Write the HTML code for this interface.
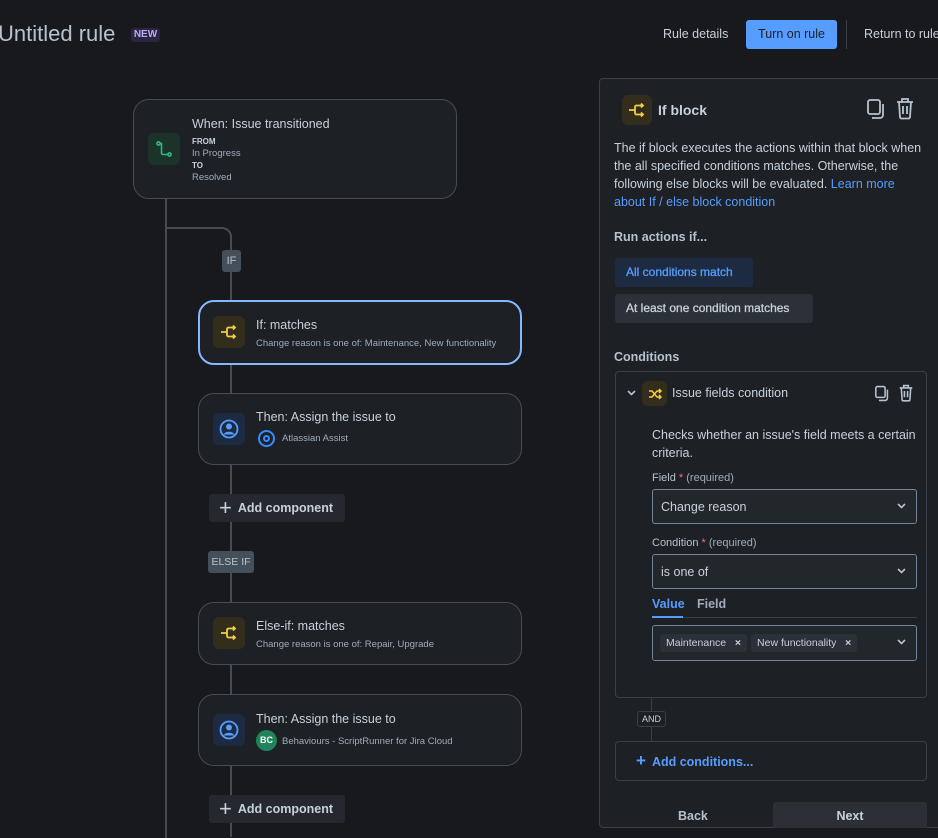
<!DOCTYPE html>
<html><head><meta charset="utf-8"><style>
*{box-sizing:border-box;margin:0;padding:0}
body{width:938px;height:834px;overflow:hidden;background:#17191c;font-family:"Liberation Sans",sans-serif;color:#c7d1db;position:relative}
.abs{position:absolute}
.card{position:absolute;left:198px;width:324px;background:#1d2025;border:1px solid #454c55;border-radius:16px}
.ic{position:absolute;width:32px;height:32px;border-radius:6px;display:flex;align-items:center;justify-content:center}
.t1{position:absolute;font-size:12.5px;color:#c7d1db;white-space:nowrap}
.t2{position:absolute;font-size:9.5px;color:#9fadbc;white-space:nowrap}
.addc{position:absolute;left:209px;width:136px;height:28px;background:#25292f;border-radius:3px;font-size:12.5px;font-weight:bold;color:#c7d1db;display:flex;align-items:center;padding-left:10px}
.lbl{position:absolute;background:#454f59;color:#b6c2cf;font-size:11px;border-radius:3px;display:flex;align-items:center;justify-content:center}
.sel{position:absolute;left:652px;width:265px;border:1px solid #738496;border-radius:3px;background:#22272b;font-size:12.5px;color:#c7d1db;padding-left:8px;display:flex;align-items:center}
.chev{position:absolute;right:10px;top:50%;margin-top:-4px}
</style></head><body>
<div class="abs" style="left:-2px;top:21px;font-size:22px;color:#b6c2cf">Untitled rule</div>
<div class="abs" style="left:131px;top:28px;width:29px;height:14px;background:#2b2541;border-radius:3px;color:#b8acf6;font-size:10px;font-weight:bold;text-align:center;line-height:14px">NEW</div>
<div class="abs" style="left:663px;top:27px;font-size:12.5px;color:#c7d1db">Rule details</div>
<div class="abs" style="left:746px;top:20px;width:91px;height:29px;background:#579dff;border-radius:3px;color:#1d2125;font-size:12.5px;text-align:center;line-height:29px">Turn on rule</div>
<div class="abs" style="left:846px;top:20px;width:1px;height:29px;background:#3b4048"></div>
<div class="abs" style="left:864px;top:27px;font-size:12.5px;color:#c7d1db;white-space:nowrap">Return to rule</div>

<div class="abs" style="left:165px;top:198px;width:2px;height:640px;background:#454c55"></div>
<div class="abs" style="left:166px;top:227px;width:66px;height:30px;border-top:2px solid #454c55;border-right:2px solid #454c55;border-top-right-radius:10px"></div>
<div class="abs" style="left:230px;top:257px;width:2px;height:580px;background:#454c55"></div>

<div class="card" style="left:133px;top:99px;height:100px"></div>
<div class="ic" style="left:148px;top:133px;background:#1c3329"><svg width="18" height="18" viewBox="0 0 18 18" fill="none" stroke="#2abb7f" stroke-width="1.6"><circle cx="3.5" cy="3.5" r="1.6"/><circle cx="14.5" cy="14.5" r="1.6"/><path d="M5 3.5h1.5v9.5a1.5 1.5 0 0 0 1.5 1.5h5"/></svg></div>
<div class="t1" style="left:192px;top:117px">When: Issue transitioned</div>
<div class="abs" style="left:192px;top:137px;font-size:8px;font-weight:bold;color:#c7d1db">FROM</div>
<div class="t2" style="left:192px;top:148px">In Progress</div>
<div class="abs" style="left:192px;top:161px;font-size:8px;font-weight:bold;color:#c7d1db">TO</div>
<div class="t2" style="left:192px;top:172px">Resolved</div>

<div class="lbl" style="left:222px;top:250px;width:19px;height:22px">IF</div>

<div class="card" style="top:300px;height:65px;border:2px solid #85b8ff"></div>
<div class="ic" style="left:213px;top:316px;background:#332e1b"><svg width="18" height="18" viewBox="0 0 18 18" fill="none" stroke="#f5cd47" stroke-width="1.8"><path d="M1 9h6M7 9V6a1.5 1.5 0 0 1 1.5-1.5H15M7 9v3a1.5 1.5 0 0 0 1.5 1.5H15M13 2.5l2 2-2 2M13 11.5l2 2-2 2"/></svg></div>
<div class="t1" style="left:256px;top:318px">If: matches</div>
<div class="t2" style="left:256px;top:338px">Change reason is one of: Maintenance, New functionality</div>

<div class="card" style="top:393px;height:72px"></div>
<div class="ic" style="left:213px;top:413px;background:#1c2b42"><svg width="20" height="20" viewBox="0 0 20 20"><circle cx="10" cy="10" r="8.5" fill="none" stroke="#579dff" stroke-width="1.8"/><circle cx="10" cy="7.5" r="3" fill="#579dff"/><path d="M4.5 15.5a6 4.5 0 0 1 11 0z" fill="#579dff"/></svg></div>
<div class="t1" style="left:256px;top:410px">Then: Assign the issue to</div>
<div class="abs" style="left:258px;top:430px;width:17px;height:17px;border-radius:50%;border:2.5px solid #388bff"><div style="margin:2.5px;width:7px;height:7px;border-radius:50%;border:2px solid #388bff"></div></div>
<div class="t2" style="left:282px;top:433px">Atlassian Assist</div>

<div class="addc" style="top:494px"><span style="font-size:22px;font-weight:normal;margin-right:6px;line-height:20px">+</span>Add component</div>

<div class="lbl" style="left:208px;top:551px;width:46px;height:22px;font-size:10.5px">ELSE IF</div>

<div class="card" style="top:602px;height:63px"></div>
<div class="ic" style="left:213px;top:617px;background:#332e1b"><svg width="18" height="18" viewBox="0 0 18 18" fill="none" stroke="#f5cd47" stroke-width="1.8"><path d="M1 9h6M7 9V6a1.5 1.5 0 0 1 1.5-1.5H15M7 9v3a1.5 1.5 0 0 0 1.5 1.5H15M13 2.5l2 2-2 2M13 11.5l2 2-2 2"/></svg></div>
<div class="t1" style="left:256px;top:619px">Else-if: matches</div>
<div class="t2" style="left:256px;top:639px">Change reason is one of: Repair, Upgrade</div>

<div class="card" style="top:694px;height:72px"></div>
<div class="ic" style="left:213px;top:714px;background:#1c2b42"><svg width="20" height="20" viewBox="0 0 20 20"><circle cx="10" cy="10" r="8.5" fill="none" stroke="#579dff" stroke-width="1.8"/><circle cx="10" cy="7.5" r="3" fill="#579dff"/><path d="M4.5 15.5a6 4.5 0 0 1 11 0z" fill="#579dff"/></svg></div>
<div class="t1" style="left:256px;top:712px">Then: Assign the issue to</div>
<div class="abs" style="left:256px;top:730px;width:21px;height:21px;border-radius:50%;background:#1f845a;color:#fff;font-size:9px;font-weight:bold;text-align:center;line-height:21px">BC</div>
<div class="t2" style="left:282px;top:736px">Behaviours - ScriptRunner for Jira Cloud</div>

<div class="addc" style="top:795px"><span style="font-size:22px;font-weight:normal;margin-right:6px;line-height:20px">+</span>Add component</div>

<div class="abs" style="left:599px;top:78px;width:345px;height:750px;background:#1d2025;border:1px solid #3b4048;border-radius:4px"></div>
<div class="ic" style="left:622px;top:95px;width:30px;height:30px;background:#332e1b"><svg width="18" height="18" viewBox="0 0 18 18" fill="none" stroke="#f5cd47" stroke-width="1.8"><path d="M1 9h6M7 9V6a1.5 1.5 0 0 1 1.5-1.5H15M7 9v3a1.5 1.5 0 0 0 1.5 1.5H15M13 2.5l2 2-2 2M13 11.5l2 2-2 2"/></svg></div>
<div class="abs" style="left:658px;top:102px;font-size:14px;font-weight:bold;color:#c7d1db">If block</div>
<svg class="abs" style="left:866px;top:98px" width="20" height="22" viewBox="0 0 20 22" fill="none" stroke="#b6c2cf" stroke-width="1.8"><rect x="2" y="2" width="12" height="14" rx="2"/><path d="M6 20h8a3 3 0 0 0 3-3V6"/></svg>
<svg class="abs" style="left:895px;top:97px" width="20" height="23" viewBox="0 0 20 23" fill="none" stroke="#b6c2cf" stroke-width="1.8"><path d="M2 5h16M7 5V2h6v3M4 5l1 15a1.5 1.5 0 0 0 1.5 1.5h7A1.5 1.5 0 0 0 15 20l1-15M8 9v8M12 9v8"/></svg>
<div class="abs" style="left:614px;top:139px;width:310px;font-size:12.5px;line-height:18px;color:#c7d1db">The if block executes the actions within that block when the all specified conditions matches. Otherwise, the following else blocks will be evaluated. <span style="color:#579dff">Learn more about If / else block condition</span></div>
<div class="abs" style="left:614px;top:230px;font-size:12.5px;font-weight:bold;color:#b6c2cf">Run actions if...</div>
<div class="abs" style="left:615px;top:258px;width:138px;height:29px;background:#1c2b42;border-radius:3px;color:#579dff;font-size:12px;line-height:29px;padding-left:11px;white-space:nowrap;-webkit-text-stroke:0.3px #579dff">All conditions match</div>
<div class="abs" style="left:615px;top:294px;width:198px;height:29px;background:#2c3038;border-radius:3px;color:#c7d1db;font-size:12px;line-height:29px;padding-left:11px;white-space:nowrap;-webkit-text-stroke:0.3px #c7d1db">At least one condition matches</div>
<div class="abs" style="left:614px;top:350px;font-size:12.5px;font-weight:bold;color:#b6c2cf">Conditions</div>

<div class="abs" style="left:615px;top:371px;width:312px;height:327px;border:1px solid #3b4048;border-radius:4px"></div>
<svg class="abs" style="left:627px;top:390px" width="9" height="6" viewBox="0 0 9 6"><path d="M1 1l3.5 3.5L8 1" stroke="#b6c2cf" stroke-width="1.6" fill="none"/></svg>
<div class="ic" style="left:642px;top:381px;width:25px;height:25px;background:#332e1b"><svg width="14" height="12" viewBox="0 0 14 12" fill="none" stroke="#f5cd47" stroke-width="1.5"><path d="M1 3h3l5 6h4M1 9h3l5-6h4M11 1l2 2-2 2M11 7l2 2-2 2"/></svg></div>
<div class="abs" style="left:672px;top:386px;font-size:12.5px;color:#c7d1db">Issue fields condition</div>
<svg class="abs" style="left:874px;top:385px" width="16" height="17" viewBox="0 0 20 22" fill="none" stroke="#b6c2cf" stroke-width="2"><rect x="2" y="2" width="12" height="14" rx="2"/><path d="M6 20h8a3 3 0 0 0 3-3V6"/></svg>
<svg class="abs" style="left:898px;top:384px" width="16" height="18" viewBox="0 0 20 23" fill="none" stroke="#b6c2cf" stroke-width="2"><path d="M2 5h16M7 5V2h6v3M4 5l1 15a1.5 1.5 0 0 0 1.5 1.5h7A1.5 1.5 0 0 0 15 20l1-15M8 9v8M12 9v8"/></svg>
<div class="abs" style="left:652px;top:426px;width:270px;font-size:12.5px;line-height:18px;color:#c7d1db">Checks whether an issue's field meets a certain criteria.</div>
<div class="abs" style="left:652px;top:472px;font-size:11px;color:#9fadbc;white-space:nowrap"><span style="color:#b6c2cf">Field</span> <span style="color:#f87168">*</span> (required)</div>
<div class="sel" style="top:489px;height:35px">Change reason<svg class="chev" width="9" height="6" viewBox="0 0 9 6"><path d="M1 1l3.5 3.5L8 1" stroke="#b6c2cf" stroke-width="1.6" fill="none"/></svg></div>
<div class="abs" style="left:652px;top:537px;font-size:11px;color:#9fadbc;white-space:nowrap"><span style="color:#b6c2cf">Condition</span> <span style="color:#f87168">*</span> (required)</div>
<div class="sel" style="top:554px;height:35px">is one of<svg class="chev" width="9" height="6" viewBox="0 0 9 6"><path d="M1 1l3.5 3.5L8 1" stroke="#b6c2cf" stroke-width="1.6" fill="none"/></svg></div>
<div class="abs" style="left:652px;top:597px;font-size:12.5px;font-weight:bold;color:#579dff">Value</div>
<div class="abs" style="left:697px;top:597px;font-size:12.5px;font-weight:bold;color:#9fadbc">Field</div>
<div class="abs" style="left:652px;top:617px;width:265px;height:1px;background:#3b4048"></div>
<div class="abs" style="left:652px;top:616px;width:31px;height:2px;background:#579dff"></div>
<div class="sel" style="top:625px;height:36px;padding-left:7px">
<span style="background:#2c3038;border-radius:3px;font-size:10.5px;padding:3px 6px;margin-right:4px;color:#c7d1db">Maintenance&nbsp;&nbsp;&nbsp;<b>×</b></span>
<span style="background:#2c3038;border-radius:3px;font-size:10.5px;padding:3px 6px;color:#c7d1db">New functionality&nbsp;&nbsp;&nbsp;<b>×</b></span>
<svg class="chev" width="9" height="6" viewBox="0 0 9 6"><path d="M1 1l3.5 3.5L8 1" stroke="#b6c2cf" stroke-width="1.6" fill="none"/></svg></div>

<div class="abs" style="left:651px;top:698px;width:1px;height:43px;background:#3b4048"></div>
<div class="abs" style="left:637px;top:711px;width:29px;height:16px;background:#1d2025;border:1px solid #3b4048;border-radius:3px;font-size:9px;color:#c7d1db;text-align:center;line-height:14px">AND</div>
<div class="abs" style="left:615px;top:741px;width:312px;height:40px;border:1px solid #3b4048;border-radius:4px"></div>
<div class="abs" style="left:636px;top:751px;font-size:12.5px;font-weight:bold;color:#579dff"><span style="font-size:17px;margin-right:6px">+</span>Add conditions...</div>
<div class="abs" style="left:678px;top:809px;font-size:12.5px;font-weight:bold;color:#b6c2cf">Back</div>
<div class="abs" style="left:773px;top:802px;width:154px;height:26px;background:#2c2f36;border-radius:3px 3px 0 0;font-size:12.5px;font-weight:bold;color:#c7d1db;text-align:center;line-height:28px">Next</div>
</body></html>
